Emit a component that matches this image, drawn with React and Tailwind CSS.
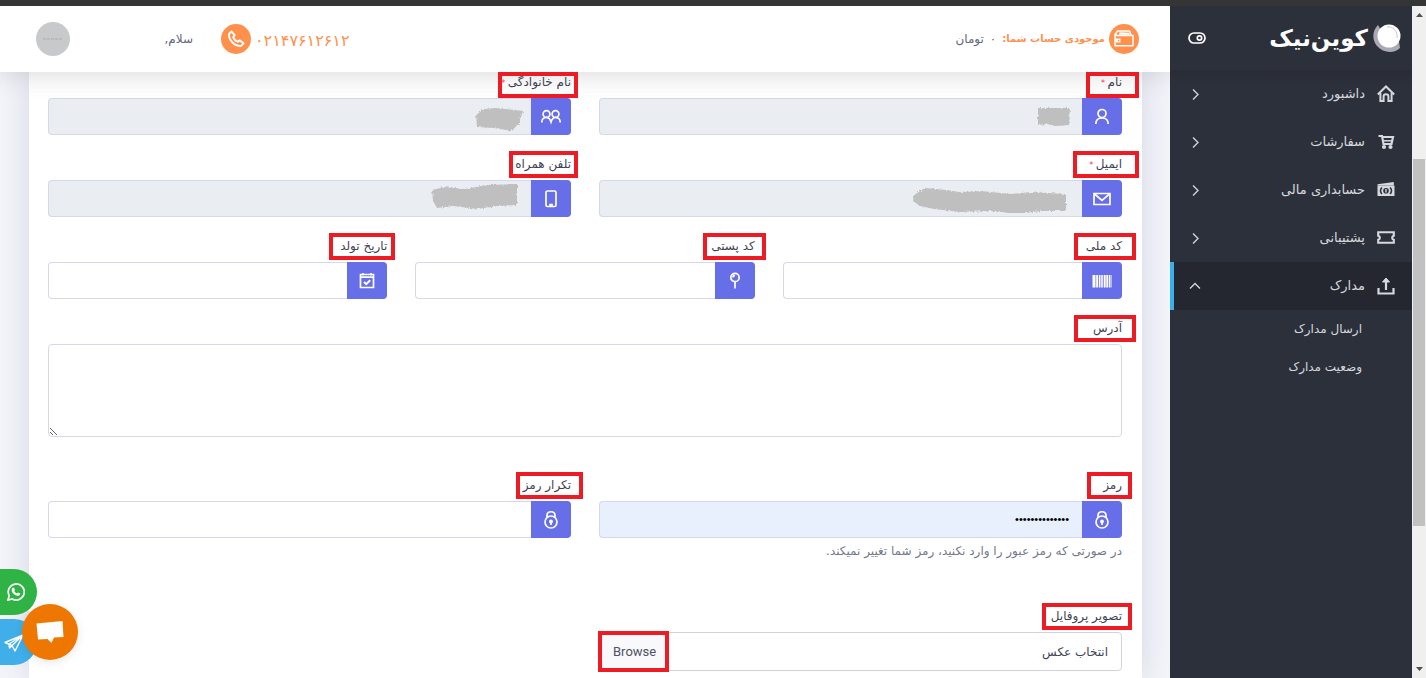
import React, { useState } from "react";

const menuItems = [
  { id: "dashboard", label: "داشبورد", icon: "home" },
  { id: "orders", label: "سفارشات", icon: "cart" },
  { id: "accounting", label: "حسابداری مالی", icon: "money" },
  { id: "support", label: "پشتیبانی", icon: "ticket" },
  {
    id: "documents",
    label: "مدارک",
    icon: "upload",
    children: ["ارسال مدارک", "وضعیت مدارک"],
  },
];

const menuIcons = {
  home: (
    <g fill="none" stroke="currentColor" strokeWidth="2">
      <path d="M.8 9.500 9 1.500l8.200 8" />
      <path d="M3.400 8v8h3.200v-4.500c0-3 4.800-3 4.800 0V16h3.200V8" />
    </g>
  ),
  cart: (
    <g fill="none" stroke="currentColor" strokeWidth="2.200">
      <path d="M1.500 3H5l1.500 8h8L16 4H5.500" />
      <path d="M6 7.800h9.500" strokeWidth="1.500" />
      <circle cx="7" cy="14" r="1" />
      <circle cx="13.500" cy="14" r="1" />
    </g>
  ),
  money: (
    <g>
      <path d="M.5 4.500V3.200L16.800 1v3.500z" fill="currentColor" />
      <path d="M.5 4.500h17V15H.5z" fill="currentColor" />
      <path
        d="M5 6.500c-2 1.800-2 4.700 0 6.500M13 6.500c2 1.800 2 4.700 0 6.500"
        fill="none"
        stroke="#2c303b"
        strokeWidth="1.600"
      />
      <circle cx="9" cy="9.700" r="2.800" fill="#2c303b" />
      <path d="M9 8v3.500" stroke="currentColor" strokeWidth="1.400" />
    </g>
  ),
  ticket: (
    <path
      d="M1.200 3.300h15.600v3.400c-2.200.6-2.200 3.500 0 4.100v3H1.200v-3c2.200-.6 2.200-3.500 0-4.100z"
      fill="none"
      stroke="currentColor"
      strokeWidth="2.100"
    />
  ),
  upload: (
    <g fill="none" stroke="currentColor" strokeWidth="2.200">
      <path d="M1.500 11v5.500h15V11M9 13V3" />
      <path d="M5.500 5 9 1l3.500 4z" fill="currentColor" strokeWidth="1" />
    </g>
  ),
};

const fieldIcons = {
  user: (
    <>
      <circle cx="10" cy="6.500" r="4" />
      <path d="M3.800 17c0-3.500 2-6 6.200-6s6.200 2.500 6.200 6" />
    </>
  ),
  users: (
    <>
      <circle cx="5.500" cy="7" r="3.400" />
      <circle cx="14.500" cy="7" r="3.400" />
      <path d="M.8 15.500c0-3 1.700-5 4.700-5 2.200 0 3.600 1.600 4.500 4.500.9-2.900 2.300-4.500 4.500-4.500 3 0 4.700 2 4.700 5" />
    </>
  ),
  mail: (
    <>
      <path d="M2 4.500h16v11H2z" />
      <path d="m2.500 5 7.500 6.500L17.500 5" />
    </>
  ),
  mobile: (
    <>
      <rect x="5" y="2" width="10" height="15.500" rx="1.500" />
      <path d="M9 17.200v-1.500h2v1.500" />
    </>
  ),
  barcode: (
    <g stroke="none" fill="currentColor">
      <path d="M.5 4h3v12.500h-3zM4.200 4h2v12.500h-2zM7 4h1.500v12.500H7zM9.200 4h1.600v12.500H9.200zM11.700 4h2v12.500h-2zM14.300 4h2v12.500h-2zM17 4h1v12.500h-1zM18.500 4h1v12.500h-1z" />
    </g>
  ),
  pin: (
    <>
      <circle cx="10" cy="6.500" r="4.200" />
      <path d="M10 10.500v7M8 6.500c0-1.500.8-2.200 2-2.200" />
    </>
  ),
  calendar: (
    <>
      <path d="M3.500 3.500h13v13h-13zM3.500 6.200h13M6 2v2.500M14 2v2.500" />
      <path d="m7 11 2.200 2.200 4-4" strokeWidth="2" />
    </>
  ),
  lock: (
    <>
      <circle cx="10" cy="12" r="6" />
      <path d="M6 7.500V5.500c0-5 8-5 8 0v2" />
      <circle cx="10" cy="11.500" r="1.100" fill="currentColor" />
      <path d="M10 12v3" />
    </>
  ),
};

// hand drawn cover over private values
const Smudge = ({ path, className, width, height }) => (
  <svg
    className={`absolute ${className}`}
    width={width}
    height={height}
    viewBox={`0 0 ${width} ${height}`}
    aria-hidden="true"
  >
    <defs>
      <filter id="rough" x="-5%" y="-15%" width="110%" height="130%">
        <feTurbulence type="fractalNoise" baseFrequency="0.5" numOctaves="2" />
        <feDisplacementMap in="SourceGraphic" scale="4" />
      </filter>
    </defs>
    <path d={path} fill="#bfbfbf" filter="url(#rough)" />
  </svg>
);

const Mark = ({ className }) => (
  <span
    className={`pointer-events-none absolute z-30 border-4 border-[#ed1c24] ${className}`}
  />
);

const FieldLabel = ({ htmlFor, label, required, mark }) => (
  <div className="relative mb-[6px] h-5 text-xs leading-5 text-[#3f4254]">
    <label htmlFor={htmlFor}>
      {label}
      {required && <span className="text-[8px] text-[#fd3550]"> *</span>}
    </label>
    <Mark className={mark} />
  </div>
);

const Field = ({
  id,
  label,
  icon,
  required,
  mark,
  type = "text",
  defaultValue,
  disabled,
  inputClass = "bg-white",
  children,
}) => (
  <div className="min-w-0 flex-1">
    <FieldLabel htmlFor={id} label={label} required={required} mark={mark} />
    <div className="relative flex h-[37px]">
      <span className="flex w-10 shrink-0 items-center justify-center rounded-r bg-[#666ee8] text-white">
        <svg
          className="h-5 w-5"
          viewBox="0 0 20 20"
          fill="none"
          stroke="currentColor"
          strokeWidth="1.700"
          aria-hidden="true"
        >
          {fieldIcons[icon]}
        </svg>
      </span>
      <input
        id={id}
        type={type}
        defaultValue={defaultValue}
        disabled={disabled}
        className={`min-w-0 flex-1 rounded-l border border-r-0 border-[#d4d8ea] px-[13px] outline-none focus:border-[#666ee8] ${inputClass}`}
      />
      {children}
    </div>
  </div>
);

const Header = () => (
  <header className="relative z-20 flex h-[66px] shrink-0 items-center justify-between bg-white pl-9 pr-[31px] text-xs text-[#62677c] shadow-[0_2px_26px_rgba(60,60,70,0.2)]">
    <div className="flex items-center gap-1">
      <span className="flex h-[30px] w-[30px] items-center justify-center rounded-full bg-[#ff914d] text-white">
        <svg className="h-[22px] w-[22px]" viewBox="0 0 22 22" aria-hidden="true">
          <path
            d="M2 6.500v11.200h18V7.500H4L2 6.500 4.500 3h12l1.500 4"
            fill="none"
            stroke="currentColor"
            strokeWidth="1.500"
            strokeLinejoin="round"
          />
          <path d="m6 6.700.5-2.500 9.500.5 1 2z" fill="currentColor" />
          <path d="M2.500 10.500h5v4h-5z" fill="currentColor" />
          <circle cx="5.500" cy="12.500" r=".8" fill="#ff914d" />
        </svg>
      </span>
      <p className="flex items-center gap-[6px]">
        <strong className="text-[10px] text-[#ff914d]">موجودی حساب شما:</strong>
        <span>۰</span>
        <span>تومان</span>
      </p>
    </div>

    <div className="flex items-center">
      <a
        href="tel:02147612612"
        className="flex items-center gap-1 text-base leading-6 text-[#ff914d]"
      >
        <span className="pt-1">۰۲۱۴۷۶۱۲۶۱۲</span>
        <span className="flex h-[30px] w-[30px] items-center justify-center rounded-full bg-[#ff914d] text-white">
          <svg
            className="h-[18px] w-[18px]"
            viewBox="0 0 18 18"
            fill="none"
            stroke="currentColor"
            strokeWidth="1.900"
            strokeLinejoin="round"
            aria-hidden="true"
          >
            <path d="M2 4.200 4.500 1.500l3.200 3.700L6.200 7c.6 2.200 2.300 4 4.700 4.800l1.800-1.500 3.800 3-2.700 2.800c-5.600.7-12.300-6-11.800-11.900z" />
          </svg>
        </span>
      </a>
      <span className="mr-7 w-[123px]">سلام,</span>
      <span className="flex h-[34px] w-[34px] items-center justify-center rounded-full bg-[#c8c9cb]">
        <svg className="h-1 w-5" viewBox="0 0 20 4" aria-hidden="true">
          <path d="M0 2h20" stroke="#b9babc" strokeWidth="2" strokeDasharray="3 1" />
        </svg>
      </span>
    </div>
  </header>
);

const Sidebar = () => {
  const [openItem, setOpenItem] = useState("documents");

  return (
    <aside className="flex w-[242px] shrink-0 flex-col bg-[#2c303b] text-[#d6d8dd]">
      <div className="flex h-16 shrink-0 items-center justify-between pl-[18px] pr-[11px]">
        <a href="#home" className="flex items-center gap-[5px] text-white">
          <svg className="h-[30px] w-7" viewBox="0 0 28 30" aria-hidden="true">
            <path
              d="M5 2C-1 8-1 17 4 23c6 7 17 8 23 2l-1-7C20 23 9 18 9 9z"
              fill="#a9aab3"
            />
            <circle cx="16" cy="13" r="11.500" fill="#fff" />
            <path
              d="M14 4c6-1 11 4 10 11"
              fill="none"
              stroke="#c9c9d0"
              strokeWidth="1"
            />
          </svg>
          <span className="whitespace-nowrap text-[23px] font-bold leading-8">
            کوین‌نیک
          </span>
        </a>
        <button type="button" aria-label="تغییر منو">
          <svg
            className="h-3 w-[18px]"
            viewBox="0 0 18 12"
            fill="none"
            stroke="#fff"
            strokeWidth="1.700"
            aria-hidden="true"
          >
            <rect x="1" y="1" width="16" height="10" rx="5" />
            <circle cx="11.500" cy="6" r="2.200" />
          </svg>
        </button>
      </div>

      <nav className="bg-linear-to-b from-[#292c37] to-[#2c303b] to-5%">
        {menuItems.map((item) => {
          const open = openItem === item.id;
          return (
            <div key={item.id}>
              <button
                type="button"
                aria-expanded={open}
                onClick={() => setOpenItem(open ? "" : item.id)}
                className={`flex h-12 w-full items-center border-l-4 pl-[15px] pr-[17px] text-[13px] ${
                  open ? "border-[#3bafe8] bg-[#242730]" : "border-transparent"
                }`}
              >
                <svg
                  className="h-[18px] w-[18px] shrink-0"
                  viewBox="0 0 18 18"
                  aria-hidden="true"
                >
                  {menuIcons[item.icon]}
                </svg>
                <span className="mr-3 flex-1 text-right">{item.label}</span>
                <svg
                  className="h-3 w-3"
                  viewBox="0 0 12 12"
                  fill="none"
                  stroke="currentColor"
                  strokeWidth="1.300"
                  aria-hidden="true"
                >
                  <path d={open ? "m1 8.500 5-5 5 5" : "m4 1.500 5 5-5 5"} />
                </svg>
              </button>
              {open &&
                item.children?.map((child) => (
                  <a
                    key={child}
                    href="#documents"
                    className="flex h-[38px] items-center pr-[50px] text-xs"
                  >
                    {child}
                  </a>
                ))}
            </div>
          );
        })}
      </nav>
    </aside>
  );
};

const ScrollRail = () => (
  <div className="flex w-[14px] shrink-0 flex-col items-center bg-[#f0f0f0] py-[7px]">
    <svg className="h-1 w-[7px]" viewBox="0 0 7 4" aria-hidden="true">
      <path d="M0 4 3.500 0 7 4z" fill="#505050" />
    </svg>
    <div className="flex-[142]" />
    <div className="w-3 flex-[367] bg-[#c1c1c1]" />
    <div className="flex-[141]" />
    <svg className="h-1 w-[7px]" viewBox="0 0 7 4" aria-hidden="true">
      <path d="M0 0h7L3.500 4z" fill="#505050" />
    </svg>
  </div>
);

const ProfileForm = () => {
  const [fileName, setFileName] = useState("");

  return (
    <form className="relative ml-[29px] mr-7 flex-1 bg-white pl-[19px] pr-5 shadow-[0_0_30px_rgba(110,120,160,0.25)]">
      <div className="mb-[19px] flex gap-7">
        <Field
          id="first-name"
          label="نام"
          icon="user"
          required
          disabled
          inputClass="bg-[#eaeef2]"
          mark="top-0 -right-[17px] h-[26px] w-[53px]"
        >
          <Smudge
            className="right-[51px] top-[9px]"
            width={34}
            height={20}
            path="M1 1h32l-1 17-14 1-8-2-9 1z"
          />
        </Field>
        <Field
          id="last-name"
          label="نام خانوادگی"
          icon="users"
          required
          disabled
          inputClass="bg-[#eaeef2]"
          mark="top-0 -right-[7px] h-[26px] w-[80px]"
        >
          <Smudge
            className="right-[46px] top-[8px]"
            width={50}
            height={27}
            path="M1 9 9 3l12-1 27 3-4 12-7 8-18-3-17-1z"
          />
        </Field>
      </div>

      <div className="mb-[19px] flex gap-7">
        <Field
          id="email"
          label="ایمیل"
          icon="mail"
          required
          disabled
          inputClass="bg-[#eaeef2]"
          mark="-top-[3px] -right-[17px] h-[27px] w-[66px]"
        >
          <Smudge
            className="right-[53px] top-[6px]"
            width={156}
            height={27}
            path="M1 9 12 2l22 2 12 2 22-1 30 3 20-2 35 2v17l-24 0-24 3-28-3-30 1-26-3-14-3-7-5z"
          />
        </Field>
        <Field
          id="mobile"
          label="تلفن همراه"
          icon="mobile"
          disabled
          inputClass="bg-[#eaeef2]"
          mark="-top-[3px] -right-[7px] h-[27px] w-[69px]"
        >
          <Smudge
            className="right-[53px] top-[2px]"
            width={87}
            height={28}
            path="M1 8 14 5l20 2 22-4 30-1v21l-18 1-22 3-24-3-16 2-4-7z"
          />
        </Field>
      </div>

      <div className="mb-[19px] flex gap-7">
        <Field
          id="national-code"
          label="کد ملی"
          icon="barcode"
          mark="-top-[3px] -right-[14px] h-[27px] w-[62px]"
        />
        <Field
          id="postal-code"
          label="کد پستی"
          icon="pin"
          mark="-top-[3px] -right-[11px] h-[27px] w-[63px]"
        />
        <Field
          id="birthday"
          label="تاریخ تولد"
          icon="calendar"
          mark="-top-[3px] -right-[8px] h-[27px] w-[66px]"
        />
      </div>

      <div className="mb-[38px]">
        <FieldLabel
          htmlFor="address"
          label="آدرس"
          mark="-top-[3px] -right-[14px] h-[27px] w-[62px]"
        />
        <textarea
          id="address"
          className="block h-[93px] w-full rounded border border-[#d4d8ea] bg-white px-[13px] py-2 text-xs outline-none focus:border-[#666ee8]"
        />
      </div>

      <div className="flex gap-7">
        <Field
          id="password"
          label="رمز"
          icon="lock"
          type="password"
          defaultValue="12345678901234"
          inputClass="bg-[#e8effd] font-['Liberation_Sans',sans-serif] text-[11px] text-black"
          mark="-top-[3px] -right-[10px] h-[27px] w-[45px]"
        />
        <Field
          id="password-repeat"
          label="تکرار رمز"
          icon="lock"
          type="password"
          mark="-top-[3px] -right-[12px] h-[27px] w-[67px]"
        />
      </div>
      <p className="mb-[45px] mt-[3px] text-xs leading-5 text-[#74788d]">
        در صورتی که رمز عبور را وارد نکنید، رمز شما تغییر نمیکند.
      </p>

      <FieldLabel
        htmlFor="profile-image"
        label="تصویر پروفایل"
        mark="-top-[3px] -right-[10px] h-[27px] w-[90px]"
      />
      <div className="flex gap-7 text-xs text-[#3f4254]">
        <div className="relative flex-1">
          <input
            id="profile-image"
            type="file"
            className="sr-only"
            onChange={(e) => setFileName(e.target.files[0]?.name || "")}
          />
          <label
            htmlFor="profile-image"
            className="flex h-[39px] items-center justify-between overflow-hidden rounded border border-[#d0d3da] pr-[13px]"
          >
            <span>{fileName || "انتخاب عکس"}</span>
            <span className="flex h-full items-center bg-[#f9f9fb] px-[13px] font-[Roboto,sans-serif] text-[13px] text-[#4e5166]">
              Browse
            </span>
          </label>
          <Mark className="-left-px -top-px h-[41px] w-[71px]" />
        </div>
        <div className="flex-1" />
      </div>
    </form>
  );
};

const FloatingContacts = () => (
  <div className="fixed bottom-[13px] left-0 z-40" dir="ltr">
    <a
      href="#whatsapp"
      aria-label="واتساپ"
      className="mb-1 flex h-[46px] w-[37px] items-center rounded-r-full bg-[#2fb344] pl-[7px] text-white"
    >
      <svg className="h-[18px] w-[18px]" viewBox="0 0 18 18" aria-hidden="true">
        <path
          d="M1 17 2.200 12.700A8 8 0 1 1 5.300 15.900z"
          fill="none"
          stroke="currentColor"
          strokeWidth="1.700"
        />
        <path
          d="M5.800 4.800 7 4.700l1 2.200-.8 1.200c.7 1.200 1.500 2 2.700 2.500l1.100-1.100 2.200 1.100c0 1.500-1.200 2.300-2.500 2.200-3.200-.3-6-3.200-6-5.800 0-1 .5-1.800 1.100-2.200z"
          fill="currentColor"
        />
      </svg>
    </a>
    <a
      href="#telegram"
      aria-label="تلگرام"
      className="flex h-[46px] w-[37px] items-center rounded-r-full bg-[#40aee9] pl-1 text-white"
    >
      <svg
        className="h-5 w-5"
        viewBox="0 0 20 20"
        fill="none"
        stroke="currentColor"
        strokeWidth="1.400"
        strokeLinejoin="round"
        aria-hidden="true"
      >
        <path d="M1 10.500 19 3l-8 16-3-5.500zM19 3 8 13.500M19 3 5 12l.5 4 2.500-2.500" />
      </svg>
    </a>
    <button
      type="button"
      aria-label="گفتگو"
      className="absolute bottom-[5px] left-[22px] flex h-14 w-14 items-center justify-center rounded-full bg-[#ed7700] shadow-[0_2px_10px_rgba(0,0,0,0.1)]"
    >
      <svg className="h-[22px] w-7" viewBox="0 0 28 22" aria-hidden="true">
        <path d="M.5 2.500 26.500 0l1 16-9.500.500L15.500 22 11.500 18 2 18.500z" fill="#fff" />
      </svg>
    </button>
  </div>
);

const App = () => {
  return (
    <div
      dir="rtl"
      className="flex h-screen flex-col overflow-hidden border-t-[6px] border-[#353535] bg-[#f4f5fa] font-['DejaVu_Sans',sans-serif]"
    >
      <div className="flex min-h-0 flex-1" dir="ltr">
        <div className="flex min-w-0 flex-1 flex-col overflow-hidden" dir="rtl">
          <Header />
          <ProfileForm />
        </div>
        <div className="flex" dir="rtl">
          <Sidebar />
        </div>
        <ScrollRail />
      </div>
      <FloatingContacts />
    </div>
  );
};

export default App;
